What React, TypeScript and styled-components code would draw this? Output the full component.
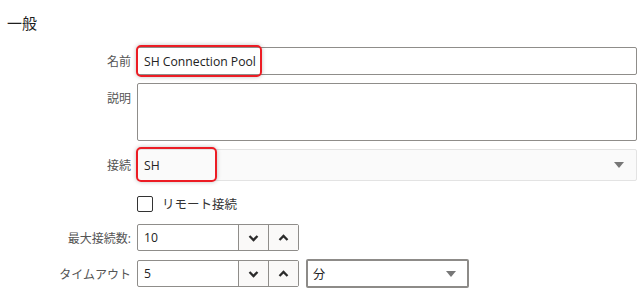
import React from 'react';
import styled, { createGlobalStyle } from 'styled-components';

const GlobalStyle = createGlobalStyle`
  body {
    margin: 0;
    background: #fff;
    font-family: 'Open Sans', 'Noto Sans CJK JP', sans-serif;
    color: #222;
  }
`;

const Page = styled.div`
  width: 643px;
  height: 293px;
  padding: 13px 6px 0 7px;
  box-sizing: border-box;
  overflow: hidden;
`;

const Heading = styled.h2`
  margin: 0 0 13px;
  font-size: 15px;
  font-weight: 400;
  line-height: 21px;
  color: #1e1e1e;
`;

const Row = styled.div<{ mt?: number }>`
  display: grid;
  grid-template-columns: 124px 500px;
  column-gap: 6px;
  align-items: center;
  margin-top: ${p => p.mt ?? 0}px;
`;

const Label = styled.label<{ top?: boolean }>`
  text-align: right;
  font-size: 12px;
  color: #555;
  align-self: ${p => (p.top ? 'start' : 'center')};
  padding-top: ${p => (p.top ? '6px' : '0')};
  white-space: nowrap;
`;

const Field = styled.div`
  position: relative;
  display: flex;
  align-items: center;
`;

const TextInput = styled.div<{ h: number }>`
  width: 100%;
  height: ${p => p.h}px;
  box-sizing: border-box;
  border: 1px solid #8f8d8a;
  border-radius: 2px;
  background: #fff;
  font-size: 12.2px;
  padding: 0 6px;
  display: flex;
  align-items: center;
`;

const SelectBox = styled.div<{ w: string; dark?: boolean }>`
  width: ${p => p.w};
  height: ${p => (p.dark ? 29 : 32)}px;
  box-sizing: border-box;
  border: ${p => (p.dark ? '2px solid #8d8b88' : '1px solid #e3e3e3')};
  border-radius: 2px;
  background: ${p => (p.dark ? '#fff' : '#fafafa')};
  font-size: 12.2px;
  padding: 0 ${p => (p.dark ? 5 : 6)}px;
  display: flex;
  align-items: center;
  justify-content: space-between;
`;

const Caret = styled.span`
  width: 0;
  height: 0;
  border-left: 5px solid transparent;
  border-right: 5px solid transparent;
  border-top: 6px solid #777;
  margin-right: 6px;
`;

const Highlight = styled.div<{ w: number; h: number; top: number }>`
  position: absolute;
  left: -1px;
  top: ${p => p.top}px;
  width: ${p => p.w}px;
  height: ${p => p.h}px;
  box-sizing: border-box;
  border: 2px solid #ec1c24;
  border-radius: 5px;
  box-shadow: 0 0 4px rgba(0, 0, 0, 0.25);
  pointer-events: none;
`;

const CheckRow = styled.div`
  display: flex;
  align-items: center;
  gap: 9px;
  font-size: 12.5px;
  color: #333;
`;

const Check = styled.span`
  width: 16px;
  height: 16px;
  box-sizing: border-box;
  border: 1px solid #333;
  border-radius: 2px;
  background: #fff;
`;

const Spinner = styled.div`
  display: flex;
  width: 162px;
  height: 27px;
  box-sizing: border-box;
  border: 1px solid #8f8d8a;
  border-radius: 2px;
  background: #fff;
`;

const SpinValue = styled.div`
  flex: 1;
  font-size: 12.2px;
  padding: 0 6px;
  display: flex;
  align-items: center;
`;

const SpinButton = styled.div`
  width: 29px;
  border-left: 1px solid #8f8d8a;
  background: #faf9f8;
  display: flex;
  align-items: center;
  justify-content: center;
`;

const Inline = styled.div`
  display: flex;
  align-items: center;
  gap: 7px;
`;

const Chevron = ({ up }: { up?: boolean }) => (
  <svg width="11" height="8" viewBox="0 0 11 8">
    <path
      d={up ? 'M1.5 6 L5.5 2 L9.5 6' : 'M1.5 2 L5.5 6 L9.5 2'}
      fill="none"
      stroke="#2b2b2b"
      strokeWidth="2.3"
    />
  </svg>
);

const NumberField = ({ value }: { value: string }) => (
  <Spinner>
    <SpinValue>{value}</SpinValue>
    <SpinButton>
      <Chevron />
    </SpinButton>
    <SpinButton>
      <Chevron up />
    </SpinButton>
  </Spinner>
);

const App = () => {
  return (
    <Page>
      <GlobalStyle />
      <Heading>一般</Heading>
      <Row>
        <Label>名前</Label>
        <Field>
          <TextInput h={28}>SH Connection Pool</TextInput>
          <Highlight w={126} h={32} top={-2} />
        </Field>
      </Row>
      <Row mt={8}>
        <Label top>説明</Label>
        <Field>
          <TextInput h={58} />
        </Field>
      </Row>
      <Row mt={8}>
        <Label>接続</Label>
        <Field>
          <SelectBox w="100%">
            SH
            <Caret />
          </SelectBox>
          <Highlight w={81} h={35} top={-2} />
        </Field>
      </Row>
      <Row mt={13}>
        <span />
        <CheckRow>
          <Check />
          リモート接続
        </CheckRow>
      </Row>
      <Row mt={11}>
        <Label>最大接続数:</Label>
        <NumberField value="10" />
      </Row>
      <Row mt={8}>
        <Label>タイムアウト</Label>
        <Inline>
          <NumberField value="5" />
          <SelectBox w="163px" dark>
            分
            <Caret />
          </SelectBox>
        </Inline>
      </Row>
    </Page>
  );
};

export default App;
